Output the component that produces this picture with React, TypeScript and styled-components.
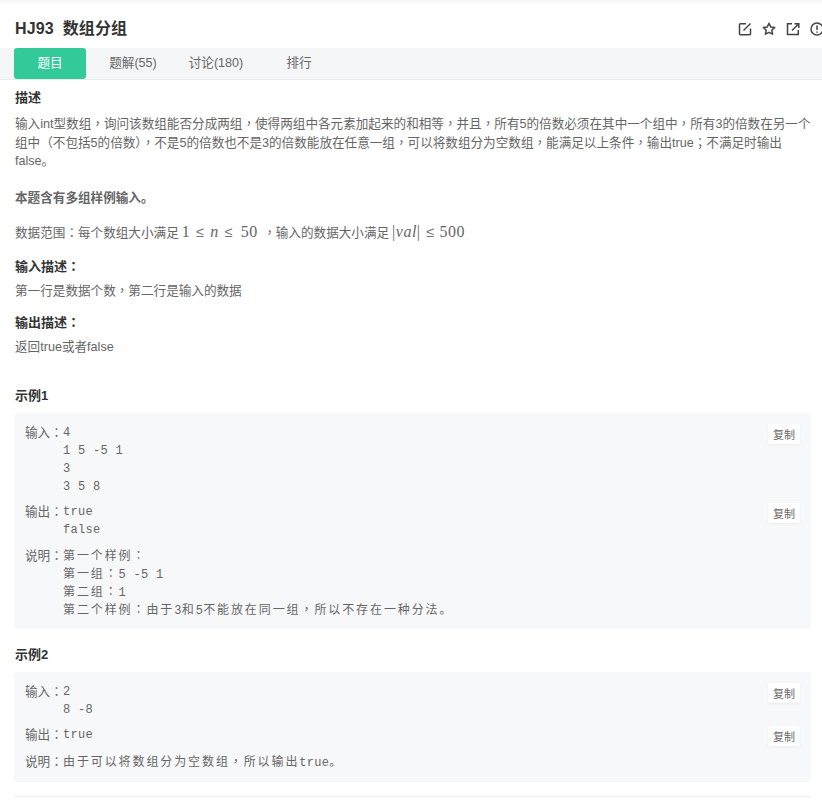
import React from 'react';
import styled, { createGlobalStyle } from 'styled-components';

const GlobalStyle = createGlobalStyle`
  html, body {
    margin: 0;
    padding: 0;
    background: #fff;
    overflow: hidden;
  }
  body {
    font-family: "Liberation Sans", "Noto Sans CJK SC", sans-serif;
    font-size: 12.6px;
    color: #666;
  }
`;

const Page = styled.div`
  width: 822px;
  height: 801px;
  border-top: 3px solid #f7f8fa;
  box-sizing: border-box;
  overflow: hidden;
`;

const TitleBar = styled.div`
  height: 45px;
  padding: 0 0 0 15px;
  display: flex;
  align-items: center;
  justify-content: space-between;
  box-sizing: border-box;
`;

const Title = styled.h1`
  margin: 3px 0 0;
  font-size: 16px;
  font-weight: 700;
  color: #333;
  letter-spacing: 0.1px;
  white-space: pre;
`;

const Actions = styled.div`
  display: flex;
  gap: 8px;
  margin: 6px -3px 0 0;
`;

const TabBar = styled.div`
  height: 32px;
  box-sizing: border-box;
  background: #f5f6f8;
  border-bottom: 1px solid #e9ecef;
  padding-left: 14px;
  display: flex;
`;

const Tab = styled.div<{ $active?: boolean; $w: number }>`
  width: ${p => p.$w}px;
  height: 31px;
  border-radius: 3px;
  text-align: center;
  line-height: 31px;
  font-size: 12.6px;
  background: ${p => (p.$active ? '#32ca99' : 'transparent')};
  color: ${p => (p.$active ? '#fff' : '#666')};
`;

const Content = styled.div`
  padding: 9px 10px 0 15px;
`;

const Heading = styled.h2<{ $top?: number }>`
  margin: ${p => p.$top ?? 0}px 0 0;
  font-size: 13px;
  line-height: 18px;
  font-weight: 700;
  color: #333;
`;

const Para = styled.p<{ $top?: number; $bold?: boolean }>`
  margin: ${p => p.$top ?? 0}px 0 0;
  line-height: 18.5px;
  font-size: 12.6px;
  font-weight: ${p => (p.$bold ? 700 : 400)};
  color: #666;
`;

const Punct = styled.span`
  font-family: "Noto Sans CJK TC", sans-serif;
  line-height: 0;
`;

const MathLine = styled.span<{ $after?: number }>`
  font-family: "Liberation Serif", serif;
  font-size: 16px;
  line-height: 0;
  color: #666;
  margin-right: ${p => p.$after ?? 0}px;
`;

const MathGlyph = styled.span<{ $left: number; $italic?: boolean }>`
  margin-left: ${p => p.$left}px;
  font-style: ${p => (p.$italic ? 'italic' : 'normal')};
  letter-spacing: 0.5px;
`;

const MathRel = styled.span<{ $left: number }>`
  margin-left: ${p => p.$left}px;
  font-family: "DejaVu Sans", sans-serif;
  font-size: 14.5px;
  font-weight: 300;
  color: #777;
`;

const SampleBox = styled.div<{ $bottom?: number }>`
  margin: 8px 0 0 -1px;
  width: 797px;
  background: #f7f8fa;
  border-radius: 4px;
  padding: 11px 11px ${p => p.$bottom ?? 2}px 11px;
  box-sizing: border-box;
`;

const SampleRow = styled.div<{ $gap?: number }>`
  display: flex;
  margin-bottom: ${p => p.$gap ?? 7}px;
`;

const SampleLabel = styled.span`
  flex: none;
  width: 38px;
  font-size: 12.6px;
  line-height: 18px;
  color: #666;
`;

const SampleCode = styled.pre<{ $note?: boolean }>`
  flex: 1;
  margin: 0;
  padding-top: ${p => (p.$note ? 1 : 0)}px;
  font-family: "Liberation Mono", "Noto Sans CJK SC", monospace;
  font-size: 12px;
  line-height: 18px;
  letter-spacing: 0.3px;
  color: #666;
`;

const Han = styled.span`
  letter-spacing: 1.9px;
`;

const CopyButton = styled.button`
  flex: none;
  width: 32px;
  height: 20px;
  padding: 0;
  border: none;
  border-radius: 2px;
  background: #fff;
  color: #666;
  font-family: inherit;
  font-size: 11px;
  box-shadow: 0 1px 3px rgba(0, 0, 0, 0.05);
`;

const Divider = styled.hr`
  margin: 14px 0 0 -1px;
  width: 797px;
  border: none;
  border-top: 1px solid #eeeef3;
`;

const iconProps = {
  width: 16,
  height: 16,
  viewBox: '0 0 16 16',
  fill: 'none',
  stroke: '#444',
  strokeWidth: 1.5,
};

const EditIcon = () => (
  <svg {...iconProps}>
    <path d="M9 2.700H3.500a1 1 0 0 0-1 1v9a1 1 0 0 0 1 1h9a1 1 0 0 0 1-1V7.500" />
    <path d="M6.500 9.500L13.500 2.500" />
  </svg>
);

const StarIcon = () => (
  <svg {...iconProps}>
    <path strokeLinejoin="round" d="M8 2.300l1.700 3.600 4 .5-2.900 2.800.8 4L8 11.300l-3.600 1.900.8-4L2.300 6.400l4-.5z" />
  </svg>
);

const ShareIcon = () => (
  <svg {...iconProps}>
    <path d="M7 2.700H2.500v10.800h10.800V9" />
    <path d="M7 9.500L13 3.500M9.500 2.700h4.300V7" />
  </svg>
);

const AlertIcon = () => (
  <svg {...iconProps}>
    <circle cx="8" cy="8" r="6" />
    <path d="M8 4.500v4.500M8 10.500v1.200" />
  </svg>
);

// fullwidth punctuation sits centred in the cell in the reference
const zh = (text: string) =>
  text.split(/([，：；（）])/).map((part, i) =>
    i % 2 ? <Punct key={i}>{part}</Punct> : <React.Fragment key={i}>{part}</React.Fragment>
  );

interface RowProps {
  label: string;
  code: React.ReactNode;
  copy?: boolean;
  note?: boolean;
  gap?: number;
}

const Row = ({ label, code, copy, note, gap }: RowProps) => (
  <SampleRow $gap={gap}>
    <SampleLabel>{zh(label)}</SampleLabel>
    <SampleCode $note={note}>{code}</SampleCode>
    {copy && <CopyButton>复制</CopyButton>}
  </SampleRow>
);

const App: React.FC = () => (
  <Page>
    <GlobalStyle />
    <TitleBar>
      <Title>HJ93  数组分组</Title>
      <Actions>
        <EditIcon />
        <StarIcon />
        <ShareIcon />
        <AlertIcon />
      </Actions>
    </TitleBar>
    <TabBar>
      <Tab $active $w={72}>题目</Tab>
      <Tab $w={94}>题解(55)</Tab>
      <Tab $w={72}>讨论(180)</Tab>
      <Tab $w={94}>排行</Tab>
    </TabBar>
    <Content>
      <Heading>描述</Heading>
      <Para $top={8}>
        {zh('输入int型数组，询问该数组能否分成两组，使得两组中各元素加起来的和相等，并且，所有5的倍数必须在其中一个组中，所有3的倍数在另一个组中（不包括5的倍数），不是5的倍数也不是3的倍数能放在任意一组，可以将数组分为空数组，能满足以上条件，输出true；不满足时输出false。')}
      </Para>
      <Para $top={18} $bold>本题含有多组样例输入。</Para>
      <Para $top={17}>
        {zh('数据范围：每个数组大小满足')}
        <MathLine $after={2}>
          <MathGlyph $left={3}>1</MathGlyph>
          <MathRel $left={6}>≤</MathRel>
          <MathGlyph $left={6} $italic>n</MathGlyph>
          <MathRel $left={6}>≤</MathRel>
          <MathGlyph $left={8}>50</MathGlyph>
        </MathLine>
        {zh('  ，输入的数据大小满足')}
        <MathLine>
          <MathGlyph $left={3}>|</MathGlyph>
          <MathGlyph $left={0} $italic>val</MathGlyph>
          <MathGlyph $left={0}>|</MathGlyph>
          <MathRel $left={6}>≤</MathRel>
          <MathGlyph $left={5}>500</MathGlyph>
        </MathLine>
      </Para>
      <Heading $top={15}>{zh('输入描述：')}</Heading>
      <Para $top={6}>{zh('第一行是数据个数，第二行是输入的数据')}</Para>
      <Heading $top={14}>{zh('输出描述：')}</Heading>
      <Para $top={6}>返回true或者false</Para>

      <Heading $top={30}>示例1</Heading>
      <SampleBox>
        <Row label="输入：" copy code={'4\n1 5 -5 1\n3\n3 5 8'} />
        <Row label="输出：" copy gap={8} code={'true\nfalse'} />
        <Row
          label="说明："
          note
          code={
            <>
              <Han>第一个样例{zh('：')}</Han>{'\n'}
              <Han>第一组{zh('：')}</Han>5 -5 1{'\n'}
              <Han>第二组{zh('：')}</Han>1{'\n'}
              <Han>第二个样例{zh('：')}由于</Han>3<Han>和</Han>5<Han>不能放在同一组{zh('，')}所以不存在一种分法。</Han>
            </>
          }
        />
      </SampleBox>

      <Heading $top={17}>示例2</Heading>
      <SampleBox $bottom={3}>
        <Row label="输入：" copy code={'2\n8 -8'} />
        <Row label="输出：" copy code="true" />
        <Row label="说明：" note code={<><Han>由于可以将数组分为空数组{zh('，')}所以输出</Han>true<Han>。</Han></>} />
      </SampleBox>
      <Divider />
    </Content>
  </Page>
);

export default App;
